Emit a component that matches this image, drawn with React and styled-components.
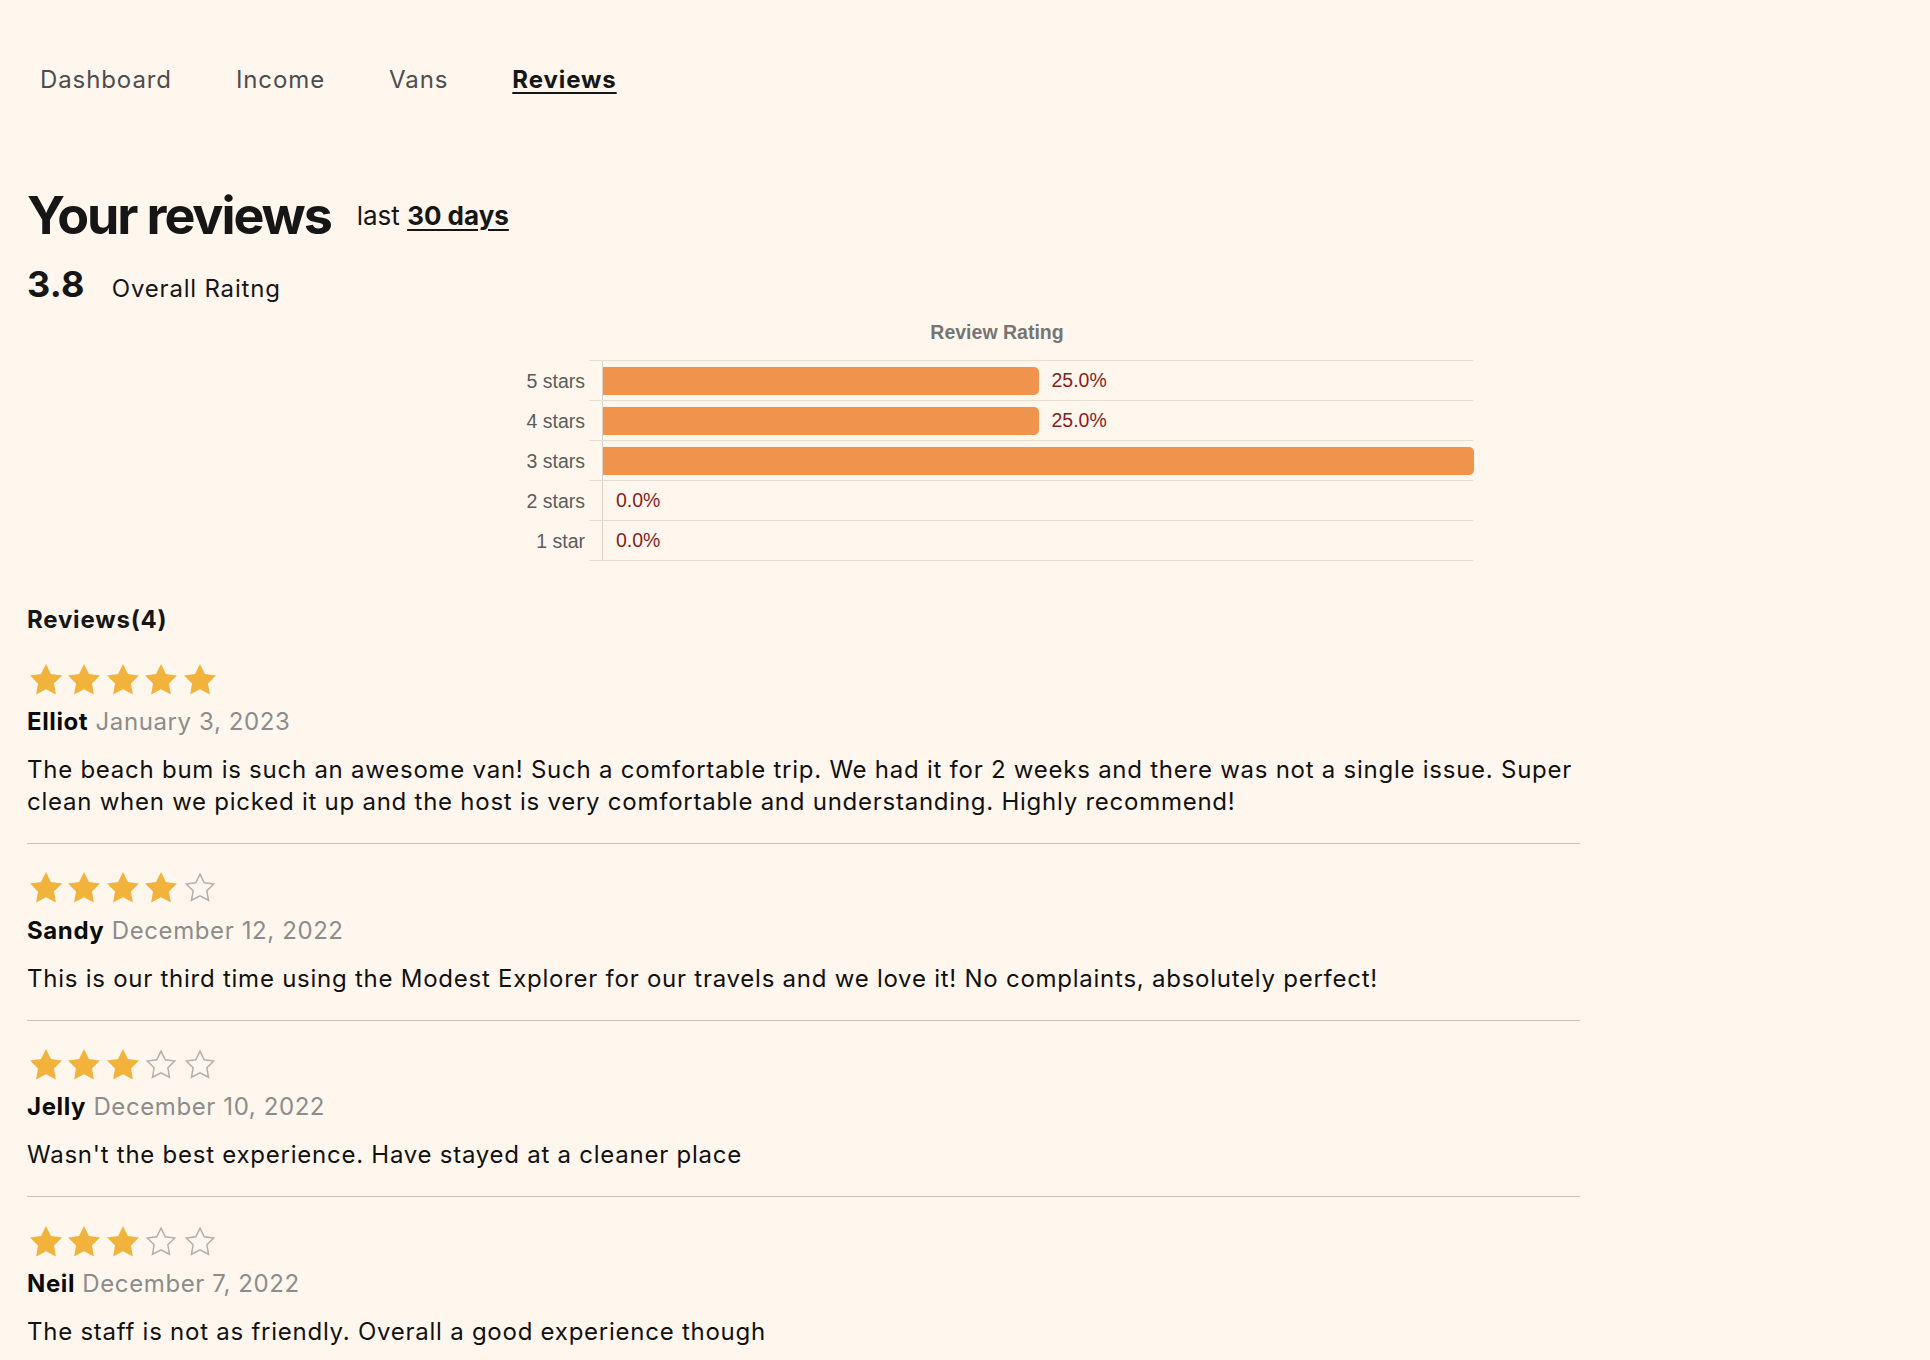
import React from "react";
import styled, { createGlobalStyle } from "styled-components";

const Global = createGlobalStyle`
  html, body { margin: 0; padding: 0; background: #fff7ed; }
  body { font-family: Inter, "Noto Sans", sans-serif; color: #161616; }
  * { box-sizing: border-box; }
`;

const Page = styled.div`
  min-height: 1360px;
  background: #fff7ed;
`;

const Nav = styled.nav`
  display: flex;
  gap: 64px;
  padding: 65px 40px 0;
`;

const NavLink = styled.a`
  font-size: 24px;
  line-height: 30px;
  letter-spacing: 0.9px;
  color: ${(p) => (p.$active ? "#161616" : "#4d4d4d")};
  font-weight: ${(p) => (p.$active ? 700 : 400)};
  text-decoration: ${(p) => (p.$active ? "underline" : "none")};
  text-underline-offset: 4px;
  text-decoration-thickness: 2px;
  cursor: pointer;
`;

const Main = styled.main`
  padding: 0 27px;
`;

const TitleRow = styled.div`
  display: flex;
  align-items: center;
  gap: 26px;
  margin-top: 90px;
`;

const Title = styled.h1`
  margin: 0;
  font-size: 52px;
  line-height: 62px;
  font-weight: 700;
  letter-spacing: -2.1px;
`;

const Period = styled.p`
  margin: 0;
  font-size: 26px;
  line-height: 32px;
  font-weight: 400;
  span {
    font-weight: 700;
    text-decoration: underline;
    text-underline-offset: 4px;
    text-decoration-thickness: 2px;
  }
`;

const ScoreRow = styled.div`
  display: flex;
  align-items: baseline;
  gap: 27px;
  margin-top: 15px;
`;

const Score = styled.span`
  font-size: 36px;
  line-height: 44px;
  font-weight: 700;
  letter-spacing: 0.3px;
`;

const ScoreLabel = styled.span`
  font-size: 24px;
  letter-spacing: 0.8px;
`;

const Chart = styled.div`
  margin: 15px 0 0 462px;
  width: 984px;
  font-family: "Liberation Sans", Arial, sans-serif;
`;

const ChartTitle = styled.div`
  padding-left: 32px;
  text-align: center;
  font-size: 19.5px;
  line-height: 22px;
  font-weight: 700;
  color: #757575;
  margin-bottom: 18px;
`;

const ChartRow = styled.div`
  display: grid;
  grid-template-columns: 100px 884px;
  height: 40px;
`;

const RowLabel = styled.div`
  align-self: center;
  text-align: right;
  padding-right: 4px;
  font-size: 19.5px;
  color: #5c5c5c;
  white-space: nowrap;
`;

const Plot = styled.div`
  display: flex;
  border-bottom: 1px solid #e6ded3;
  border-top: ${(p) => (p.$first ? "1px solid #e6ded3" : "none")};
  margin-top: ${(p) => (p.$first ? "-1px" : "0")};
`;

const Track = styled.div`
  flex: 1;
  margin-left: 13px;
  border-left: 1px solid #d9d3cb;
  display: flex;
  align-items: center;
`;

const Bar = styled.div`
  height: 28px;
  background: #f0944d;
  border-radius: 0 5px 5px 0;
`;

const BarValue = styled.span`
  margin-left: 13px;
  font-size: 19.5px;
  color: #8b1c1c;
`;

const ReviewsHeading = styled.h3`
  margin: 44px 0 0;
  font-size: 24px;
  line-height: 30px;
  font-weight: 700;
  letter-spacing: 0.8px;
`;

const ReviewList = styled.div`
  width: 1553px;
  margin-top: 29px;
`;

const Review = styled.article`
  padding-bottom: ${(p) => (p.$last ? "0" : "25px")};
  border-bottom: ${(p) => (p.$last ? "none" : "1px solid #c7c4c0")};
  margin-bottom: ${(p) => (p.$last ? "0" : "28.6px")};
`;

const Stars = styled.div`
  display: flex;
  gap: 6.4px;
  height: 30px;
  align-items: center;
  padding-left: 3px;
`;

const NameLine = styled.p`
  margin: 13px 0 0;
  font-size: 24px;
  line-height: 30px;
  letter-spacing: 0.6px;
`;

const Name = styled.span`
  font-weight: 700;
  color: #0b0b0b;
`;

const DateText = styled.span`
  color: #8c8c8c;
`;

const Body = styled.p`
  margin: 17px 0 0;
  font-size: 24px;
  line-height: 32px;
  letter-spacing: 0.75px;
  color: #111;
`;

const Star = ({ filled }) => (
  <svg width="32" height="30.4" viewBox="2 2 20 19.02" style={{ overflow: "visible" }}>
    <polygon
      points="12,2 15.09,8.26 22,9.27 17,14.14 18.18,21.02 12,17.77 5.82,21.02 7,14.14 2,9.27 8.91,8.26"
      fill={filled ? "#f2b33d" : "none"}
      stroke={filled ? "none" : "#b3b0ab"}
      strokeWidth={filled ? 0 : 1.1}
      strokeLinejoin="miter"
      transform={filled ? "" : "translate(12 11.5) scale(0.86) translate(-12 -11.5)"}
    />
  </svg>
);

const ratings = [
  { label: "5 stars", pct: 25 },
  { label: "4 stars", pct: 25 },
  { label: "3 stars", pct: 50 },
  { label: "2 stars", pct: 0 },
  { label: "1 star", pct: 0 },
];

const reviews = [
  {
    rating: 5,
    name: "Elliot",
    date: "January 3, 2023",
    text: "The beach bum is such an awesome van! Such a comfortable trip. We had it for 2 weeks and there was not a single issue. Super clean when we picked it up and the host is very comfortable and understanding. Highly recommend!",
  },
  {
    rating: 4,
    name: "Sandy",
    date: "December 12, 2022",
    text: "This is our third time using the Modest Explorer for our travels and we love it! No complaints, absolutely perfect!",
  },
  {
    rating: 3,
    name: "Jelly",
    date: "December 10, 2022",
    text: "Wasn't the best experience. Have stayed at a cleaner place",
  },
  {
    rating: 3,
    name: "Neil",
    date: "December 7, 2022",
    text: "The staff is not as friendly. Overall a good experience though",
  },
];

export default function App() {
  const trackWidth = 871;
  return (
    <Page>
      <Global />
      <Nav>
        <NavLink>Dashboard</NavLink>
        <NavLink>Income</NavLink>
        <NavLink>Vans</NavLink>
        <NavLink $active>Reviews</NavLink>
      </Nav>
      <Main>
        <TitleRow>
          <Title>Your reviews</Title>
          <Period>
            last <span>30 days</span>
          </Period>
        </TitleRow>
        <ScoreRow>
          <Score>3.8</Score>
          <ScoreLabel>Overall Raitng</ScoreLabel>
        </ScoreRow>
        <Chart>
          <ChartTitle>Review Rating</ChartTitle>
          {ratings.map((r, i) => (
            <ChartRow key={r.label}>
              <RowLabel>{r.label}</RowLabel>
              <Plot $first={i === 0}>
                <Track>
                  {r.pct > 0 && (
                    <Bar style={{ width: `${(r.pct / 50) * trackWidth}px` }} />
                  )}
                  {r.pct < 50 && <BarValue>{r.pct.toFixed(1)}%</BarValue>}
                </Track>
              </Plot>
            </ChartRow>
          ))}
        </Chart>
        <ReviewsHeading>Reviews(4)</ReviewsHeading>
        <ReviewList>
          {reviews.map((rv, i) => (
            <Review key={rv.name} $last={i === reviews.length - 1}>
              <Stars>
                {[1, 2, 3, 4, 5].map((n) => (
                  <Star key={n} filled={n <= rv.rating} />
                ))}
              </Stars>
              <NameLine>
                <Name>{rv.name}</Name> <DateText>{rv.date}</DateText>
              </NameLine>
              <Body>{rv.text}</Body>
            </Review>
          ))}
        </ReviewList>
      </Main>
    </Page>
  );
}
